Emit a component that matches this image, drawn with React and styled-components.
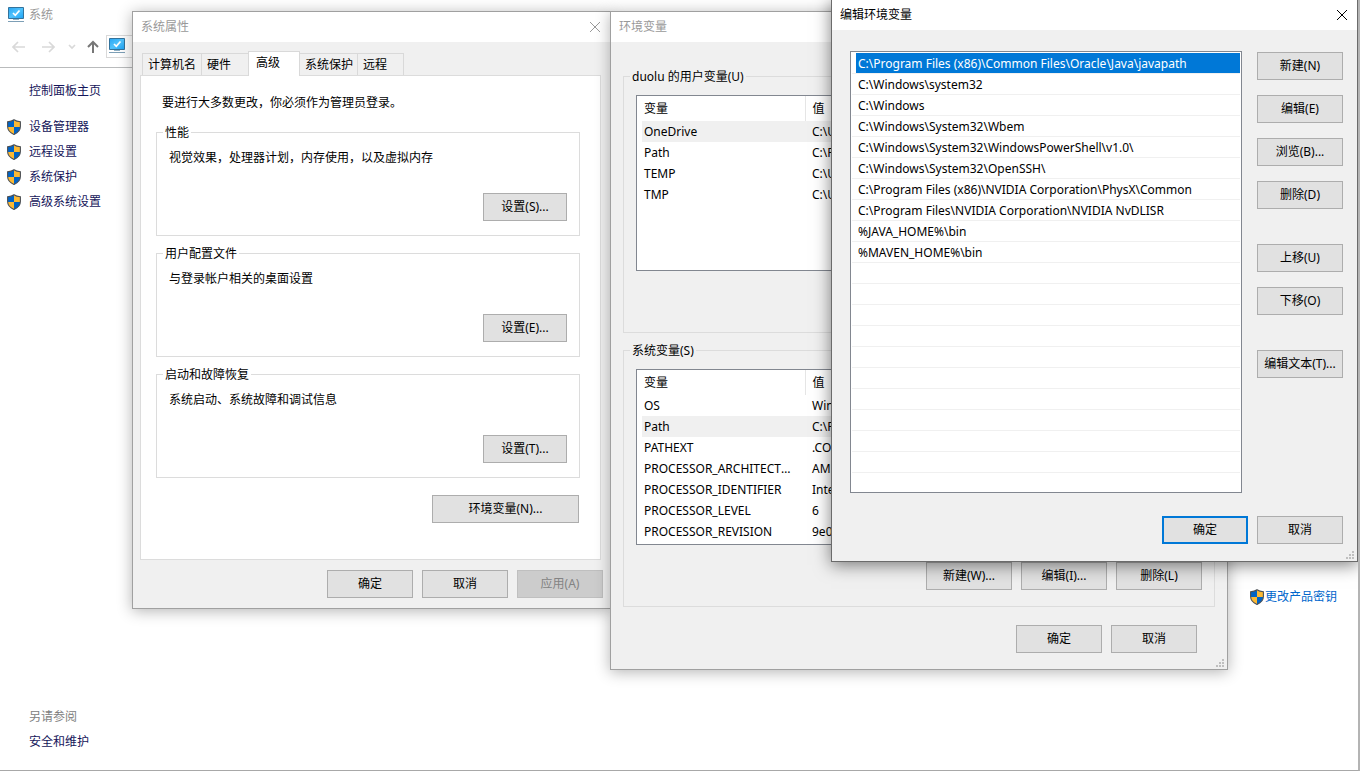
import React from 'react'
import styled, { createGlobalStyle } from 'styled-components'

const GlobalStyle = createGlobalStyle`
  * {
    box-sizing: border-box;
  }
  body {
    margin: 0;
    background: #fff;
    color: #000;
  }
  body, button, table, legend {
    font-family: 'Noto Sans', 'Noto Sans CJK SC', sans-serif;
    font-size: 12px;
    line-height: 16px;
  }
`

const Desktop = styled.div`
  position: relative;
  min-height: 100vh;
  overflow: hidden;
  display: flex;
  flex-direction: column;
  border-right: 2px solid #b4b4b4;
  border-bottom: 1px solid #a8a8a8;
`

/* ---------- control panel page ---------- */

const PageTitle = styled.div`
  display: flex;
  align-items: center;
  gap: 5px;
  height: 30px;
  padding-left: 8px;
  color: #999;
`
const NavBar = styled.div`
  display: flex;
  align-items: center;
  height: 38px;
  padding: 0 0 4px 12px;
  border-bottom: 1px solid #b9bbbc;
`
const NavButton = styled.button`
  display: flex;
  padding: 0;
  border: none;
  background: none;
  margin-right: ${p => p.$gap}px;
`
const AddressBar = styled.div`
  flex: 1;
  height: 23px;
  padding: 2px;
  border: 1px solid #d9d9d9;
`
const PageBody = styled.div`
  flex: 1;
  display: flex;
  justify-content: space-between;
`
const Sidebar = styled.nav`
  display: flex;
  flex-direction: column;
  padding: 10px 0 16px 6px;
`
const SideLink = styled.a`
  display: flex;
  align-items: center;
  gap: 7px;
  height: 25px;
  padding-left: ${p => (p.$plain ? 23 : 0)}px;
  margin-bottom: ${p => (p.$home ? 11 : 0)}px;
  color: #15155a;
  text-decoration: none;
`
const SeeAlso = styled.div`
  margin-top: auto;
  padding-left: 23px;
  line-height: 25px;
  color: #808080;
`
const ProductKey = styled.a`
  display: flex;
  align-items: center;
  align-self: flex-start;
  margin: 521px 21px 0 0;
  color: #0066cc;
  text-decoration: none;
`

/* ---------- windows ---------- */

const Window = styled.section`
  position: absolute;
  left: ${p => p.$x}px;
  top: ${p => p.$y}px;
  width: ${p => p.$w}px;
  display: flex;
  flex-direction: column;
  background: #f0f0f0;
  border: 1px solid ${p => (p.$active ? '#6b6b6b' : '#a0a0a0')};
  box-shadow: ${p => (p.$active ? '0 3px 16px rgba(0, 0, 0, 0.5)' : '0 2px 14px rgba(0, 0, 0, 0.3)')};
`
const TitleBar = styled.header`
  display: flex;
  align-items: center;
  justify-content: space-between;
  height: 30px;
  padding: 0 9px 0 8px;
  background: #fff;
  color: ${p => (p.$active ? '#000' : '#999')};
`
const CloseButton = styled.button`
  display: flex;
  padding: 0;
  border: none;
  background: none;
  color: inherit;
`
const Button = styled.button`
  width: ${p => p.$w || 86}px;
  height: 28px;
  padding: 0;
  background: #e1e1e1;
  border: 1px solid #adadad;
  color: #000;
  white-space: nowrap;

  ${p => p.$primary && 'border: 2px solid #0078d7;'}

  &:disabled {
    background: #ccc;
    border-color: #bfbfbf;
    color: #838383;
  }
`
const ButtonRow = styled.div`
  display: flex;
  justify-content: flex-end;
  gap: 9px;
`
const GroupBox = styled.fieldset`
  min-width: 0;
  margin: 0 0 8px;
  border: 1px solid #dcdcdc;
`
const Legend = styled.legend`
  margin-left: -6px;
  padding: 2px 2px 0;
`

/* system properties */

const PropsBody = styled.div`
  padding: 9px 7px 10px 7px;
`
const Tabs = styled.div`
  display: flex;
  align-items: flex-end;
  height: 24px;
  padding-left: 2px;
`
const Tab = styled.button`
  width: ${p => p.$w}px;
  height: ${p => (p.$active ? 25 : 22)}px;
  margin: 0 0 ${p => (p.$active ? -1 : 0)}px ${p => (p.$first ? 0 : -1)}px;
  padding: 0 0 ${p => (p.$active ? 2 : 0)}px ${p => (p.$active ? 7 : 5)}px;
  background: ${p => (p.$active ? '#fff' : '#f0f0f0')};
  border: 1px solid #d9d9d9;
  border-bottom: none;
  color: #000;
  text-align: left;
  white-space: nowrap;
  z-index: ${p => (p.$active ? 1 : 0)};
`
const TabPanel = styled.div`
  display: flex;
  flex-direction: column;
  width: 461px;
  height: 485px;
  padding: 19px 20px 0 15px;
  background: #fff;
  border: 1px solid #dcdcdc;
`
const Intro = styled.p`
  margin: 0 0 12px;
  padding-left: 6px;
`
const Section = styled(GroupBox)`
  height: 113px;
  padding: 9px 12px 0 12px;
`
const SectionText = styled.p`
  margin: 0 0 27px;
`
const VariablesRow = styled(ButtonRow)`
  padding: 9px 1px 0 0;
`
const PropsFooter = styled(ButtonRow)`
  padding-top: 10px;
`

/* environment variables */

const EnvBody = styled.div`
  display: flex;
  flex-direction: column;
  padding: 25px 12px 16px 12px;
`
const EnvGroup = styled(GroupBox)`
  height: 266px;
  padding: 10px 12px 0 12px;
`
const EnvFooter = styled(ButtonRow)`
  padding: 10px 18px 0 0;
`
const ListFrame = styled.div`
  height: 176px;
  margin-bottom: 17px;
  padding: 0 5px;
  background: #fff;
  border: 1px solid #828790;
  overflow: hidden;
`
const VarTable = styled.table`
  width: 100%;
  table-layout: fixed;
  border-collapse: collapse;

  th, td {
    height: 21px;
    padding: 0 7px 0 2px;
    text-align: left;
    font-weight: normal;
    white-space: nowrap;
    overflow: hidden;
    text-overflow: ellipsis;
  }
  th {
    height: 25px;
  }
  th:first-child {
    width: 163px;
    border-right: 1px solid #e5e5e5;
  }
  th + th, td + td {
    padding-left: 7px;
  }
`
const VarRow = styled.tr`
  background: ${p => (p.$selected ? '#f0f0f0' : 'transparent')};
`

/* edit variable */

const EditBody = styled.div`
  padding: 21px 14px 17px 18px;
`
const EditMain = styled.div`
  display: flex;
  gap: 15px;
  margin-bottom: 23px;
`
const PathList = styled.ul`
  flex: 1;
  height: 442px;
  margin: 0;
  padding: 1px;
  background: #fff;
  border: 1px solid #828790;
  list-style: none;
  overflow: hidden;
`
const PathItem = styled.li`
  display: flex;
  height: 21px;
  padding-left: 4px;
  border-bottom: 1px solid #f0f0f0;
`
const PathText = styled.span`
  flex: 1;
  padding: 3px 2px 1px;
  background: ${p => (p.$selected ? '#0078d7' : 'transparent')};
  color: ${p => (p.$selected ? '#fff' : '#000')};
`
const SideButtons = styled.div`
  display: flex;
  flex-direction: column;
  padding-top: 1px;
  gap: 15px;
`
const ButtonGroup = styled.div`
  display: flex;
  flex-direction: column;
  gap: 15px;
  margin-bottom: 20px;
`
const Grip = styled.svg`
  position: absolute;
  right: 2px;
  bottom: 1px;
`
const MonitorSvg = styled.svg`
  display: block;
`

const Shield = () => (
  <svg width="16" height="16" viewBox="0 0 16 16">
    <clipPath id="shield">
      <path d="M8 .8C9.700 2 11.700 2.600 14.300 2.800v4.700c0 3.600-2.400 6.300-6.300 8-3.900-1.700-6.300-4.400-6.300-8V2.800C4.300 2.600 6.300 2 8 .8z" />
    </clipPath>
    <g clipPath="url(#shield)">
      <path d="M0 0h8v8H0z" fill="#0063c6" />
      <path d="M8 0h8v8H8z" fill="#fdb933" />
      <path d="M0 8h8v8H0z" fill="#fdb933" />
      <path d="M8 8h8v8H8z" fill="#0063c6" />
    </g>
    <path
      d="M8 .8C9.700 2 11.700 2.600 14.400 2.800v4.700c0 3.600-2.500 6.300-6.400 8-3.900-1.700-6.400-4.400-6.400-8V2.800C4.300 2.600 6.300 2 8 .8z"
      fill="none"
      stroke="#4b4f54"
      strokeWidth="1.100"
    />
  </svg>
)

const Monitor = () => (
  <MonitorSvg width="16" height="16" viewBox="0 0 16 16">
    <linearGradient id="screen" x1="0" y1="0" x2="1" y2="1">
      <stop offset="0" stopColor="#27a4f2" />
      <stop offset="0.5" stopColor="#52c3fc" />
      <stop offset="1" stopColor="#1ba2f5" />
    </linearGradient>
    <path d="M.5.5h15v11H.5z" fill="url(#screen)" stroke="#33739c" />
    <path d="M5 6l2.300 2.300L11.500 3.500" fill="none" stroke="#fff" strokeWidth="1.700" />
    <path d="M5 12.500h6" stroke="#8fb0c4" />
    <path d="M0 14.500h16" stroke="#7d9fb6" />
  </MonitorSvg>
)

const CloseIcon = () => (
  <svg width="12" height="12" viewBox="0 0 12 12">
    <path d="M1 1l10 10M11 1L1 11" stroke="currentColor" fill="none" />
  </svg>
)

const SizeGrip = () => (
  <Grip width="9" height="9" viewBox="0 0 9 9" fill="#bfbfbf">
    <path d="M6 0h2v2H6zM3 3h2v2H3zM6 3h2v2H6zM0 6h2v2H0zM3 6h2v2H3zM6 6h2v2H6z" />
  </Grip>
)

const Arrow = ({ d, color, width = 13, stroke = 1.7 }) => (
  <svg width={width} height="14" viewBox={`0 0 ${width} 14`}>
    <path d={d} fill="none" stroke={color} strokeWidth={stroke} />
  </svg>
)

const sections = [
  { title: '性能', text: '视觉效果，处理器计划，内存使用，以及虚拟内存', button: '设置(S)...' },
  { title: '用户配置文件', text: '与登录帐户相关的桌面设置', button: '设置(E)...' },
  { title: '启动和故障恢复', text: '系统启动、系统故障和调试信息', button: '设置(T)...' },
]

const userVars = [
  ['OneDrive', 'C:\\User'],
  ['Path', 'C:\\Pro'],
  ['TEMP', 'C:\\User'],
  ['TMP', 'C:\\User'],
]

const systemVars = [
  ['OS', 'Wind'],
  ['Path', 'C:\\Pro'],
  ['PATHEXT', '.COM'],
  ['PROCESSOR_ARCHITECTURE', 'AMD'],
  ['PROCESSOR_IDENTIFIER', 'Intel'],
  ['PROCESSOR_LEVEL', '6'],
  ['PROCESSOR_REVISION', '9e0a'],
]

const paths = [
  'C:\\Program Files (x86)\\Common Files\\Oracle\\Java\\javapath',
  'C:\\Windows\\system32',
  'C:\\Windows',
  'C:\\Windows\\System32\\Wbem',
  'C:\\Windows\\System32\\WindowsPowerShell\\v1.0\\',
  'C:\\Windows\\System32\\OpenSSH\\',
  'C:\\Program Files (x86)\\NVIDIA Corporation\\PhysX\\Common',
  'C:\\Program Files\\NVIDIA Corporation\\NVIDIA NvDLISR',
  '%JAVA_HOME%\\bin',
  '%MAVEN_HOME%\\bin',
]
const emptyRows = Array.from({ length: 10 }, () => '')

const VariableList = ({ rows, selected }) => (
  <ListFrame>
    <VarTable>
      <thead>
        <tr>
          <th>变量</th>
          <th>值</th>
        </tr>
      </thead>
      <tbody>
        {rows.map(([name, value], index) => (
          <VarRow key={name} $selected={index === selected}>
            <td>{name}</td>
            <td>{value}</td>
          </VarRow>
        ))}
      </tbody>
    </VarTable>
  </ListFrame>
)

const ControlPanelPage = () => (
  <>
    <PageTitle>
      <Monitor />
      系统
    </PageTitle>
    <NavBar>
      <NavButton $gap={17} aria-label="后退">
        <Arrow d="M13 7H1.500M6 2L1 7l5 5" color="#d9d9d9" />
      </NavButton>
      <NavButton $gap={13} aria-label="前进">
        <Arrow d="M0 7h11.500M7 2l5 5-5 5" color="#d9d9d9" />
      </NavButton>
      <NavButton $gap={11} aria-label="历史">
        <Arrow d="M1 5l3 3 3-3" color="#d9d9d9" width={8} />
      </NavButton>
      <NavButton $gap={7} aria-label="向上">
        <Arrow d="M6 13V2M1 7l5-5 5 5" color="#777" width={12} stroke={2} />
      </NavButton>
      <AddressBar>
        <Monitor />
      </AddressBar>
    </NavBar>
    <PageBody>
      <Sidebar>
        <SideLink href="#" $plain $home>控制面板主页</SideLink>
        <SideLink href="#"><Shield />设备管理器</SideLink>
        <SideLink href="#"><Shield />远程设置</SideLink>
        <SideLink href="#"><Shield />系统保护</SideLink>
        <SideLink href="#"><Shield />高级系统设置</SideLink>
        <SeeAlso>另请参阅</SeeAlso>
        <SideLink href="#" $plain>安全和维护</SideLink>
      </Sidebar>
      <ProductKey href="#"><Shield />更改产品密钥</ProductKey>
    </PageBody>
  </>
)

const SystemProperties = () => (
  <Window $x={132} $y={11} $w={479}>
    <TitleBar>
      系统属性
      <CloseButton aria-label="关闭"><CloseIcon /></CloseButton>
    </TitleBar>
    <PropsBody>
      <Tabs>
        <Tab $w={60} $first>计算机名</Tab>
        <Tab $w={48}>硬件</Tab>
        <Tab $w={52} $active>高级</Tab>
        <Tab $w={59}>系统保护</Tab>
        <Tab $w={47}>远程</Tab>
      </Tabs>
      <TabPanel>
        <Intro>要进行大多数更改，你必须作为管理员登录。</Intro>
        {sections.map(item => (
          <Section key={item.title}>
            <Legend>{item.title}</Legend>
            <SectionText>{item.text}</SectionText>
            <ButtonRow>
              <Button $w={84}>{item.button}</Button>
            </ButtonRow>
          </Section>
        ))}
        <VariablesRow>
          <Button $w={147}>环境变量(N)...</Button>
        </VariablesRow>
      </TabPanel>
      <PropsFooter>
        <Button>确定</Button>
        <Button>取消</Button>
        <Button disabled>应用(A)</Button>
      </PropsFooter>
    </PropsBody>
  </Window>
)

const EnvironmentVariables = () => (
  <Window $x={610} $y={11} $w={618}>
    <TitleBar>环境变量</TitleBar>
    <EnvBody>
      <EnvGroup>
        <Legend>duolu 的用户变量(U)</Legend>
        <VariableList rows={userVars} selected={0} />
      </EnvGroup>
      <EnvGroup>
        <Legend>系统变量(S)</Legend>
        <VariableList rows={systemVars} selected={1} />
        <ButtonRow>
          <Button>新建(W)...</Button>
          <Button>编辑(I)...</Button>
          <Button>删除(L)</Button>
        </ButtonRow>
      </EnvGroup>
      <EnvFooter>
        <Button>确定</Button>
        <Button>取消</Button>
      </EnvFooter>
    </EnvBody>
    <SizeGrip />
  </Window>
)

const EditVariable = () => (
  <Window $x={831} $y={-1} $w={527} $active>
    <TitleBar $active>
      编辑环境变量
      <CloseButton aria-label="关闭"><CloseIcon /></CloseButton>
    </TitleBar>
    <EditBody>
      <EditMain>
        <PathList>
          {paths.concat(emptyRows).map((path, index) => (
            <PathItem key={index}>
              <PathText $selected={index === 0}>{path}</PathText>
            </PathItem>
          ))}
        </PathList>
        <SideButtons>
          <ButtonGroup>
            <Button>新建(N)</Button>
            <Button>编辑(E)</Button>
            <Button>浏览(B)...</Button>
            <Button>删除(D)</Button>
          </ButtonGroup>
          <ButtonGroup>
            <Button>上移(U)</Button>
            <Button>下移(O)</Button>
          </ButtonGroup>
          <Button>编辑文本(T)...</Button>
        </SideButtons>
      </EditMain>
      <ButtonRow>
        <Button $primary>确定</Button>
        <Button>取消</Button>
      </ButtonRow>
    </EditBody>
    <SizeGrip />
  </Window>
)

class App extends React.Component {
  render() {
    return (
      <Desktop>
        <GlobalStyle />
        <ControlPanelPage />
        <SystemProperties />
        <EnvironmentVariables />
        <EditVariable />
      </Desktop>
    )
  }
}

export default App
